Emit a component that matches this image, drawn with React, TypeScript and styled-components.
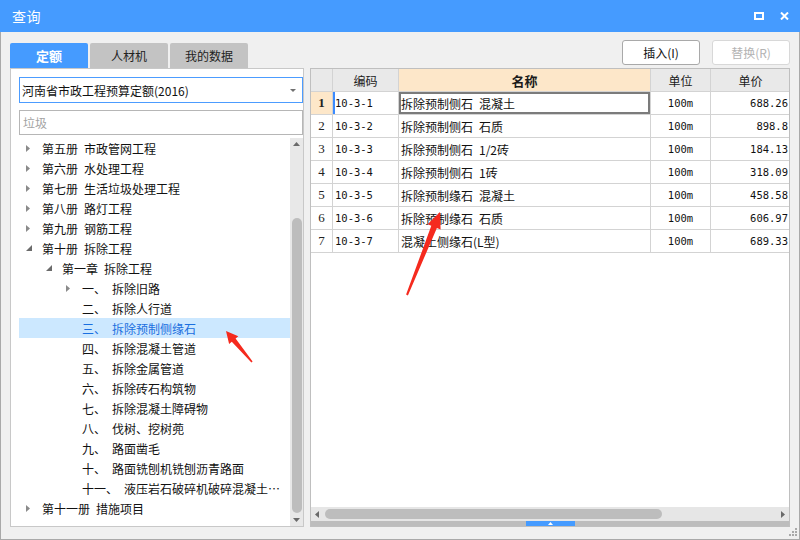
import React from "react";
import styled, { createGlobalStyle } from "styled-components";

const CJK = `"Noto Sans CJK SC", "Noto Sans", sans-serif`;
const MONO = `"DejaVu Sans Mono", "Liberation Mono", "Noto Sans CJK SC", monospace`;

const GlobalStyle = createGlobalStyle`
  *, *::before, *::after { box-sizing: border-box; }
  html, body { margin: 0; padding: 0; background: #ffffff; }
  body { font-family: ${CJK}; }
`;

const Window = styled.div`
  position: relative;
  width: 800px;
  height: 540px;
  display: flex;
  flex-direction: column;
  background: #f0f0f0;
  overflow: hidden;
`;

const TitleBar = styled.div`
  flex: none;
  height: 32px;
  background: #459bff;
  color: #ffffff;
  display: flex;
  align-items: center;
  padding: 0 11px 0 12px;
`;

const Title = styled.div`
  flex: 1;
  font-size: 14px;
  letter-spacing: 0.5px;
`;

const TitleButtons = styled.div`
  display: flex;
  align-items: center;
  gap: 16px;
`;

const Glyph = styled.svg`
  display: block;
  flex: none;
`;

const Body = styled.div`
  flex: 1;
  min-height: 0;
  display: flex;
  flex-direction: column;
  border: 1px solid #a9a9a9;
  border-top: none;
  padding: 0 9px 12px;
`;

const TopRow = styled.div`
  flex: none;
  height: 36px;
  display: flex;
  justify-content: space-between;
`;

const Tabs = styled.div`
  display: flex;
  gap: 2px;
  align-self: flex-end;
`;

const Tab = styled.div<{ $active?: boolean }>`
  width: 78px;
  height: 25px;
  display: flex;
  align-items: center;
  justify-content: center;
  font-size: ${(p) => (p.$active ? 13 : 12)}px;
  font-weight: ${(p) => (p.$active ? 700 : 400)};
  background: ${(p) => (p.$active ? "#459bff" : "#c3c3c3")};
  color: ${(p) => (p.$active ? "#ffffff" : "#222222")};
  border-radius: 2px 2px 0 0;
`;

const Actions = styled.div`
  display: flex;
  gap: 12px;
  padding-top: 8px;
`;

const ActionButton = styled.button<{ $disabled?: boolean }>`
  width: 78px;
  height: 25px;
  padding: 0;
  background: #ffffff;
  border: 1px solid ${(p) => (p.$disabled ? "#d8d8d8" : "#a9a9a9")};
  border-radius: 3px;
  font-family: ${CJK};
  font-size: 12px;
  color: ${(p) => (p.$disabled ? "#b3b3b3" : "#111111")};
`;

const Content = styled.div`
  flex: 1;
  min-height: 0;
  display: flex;
  gap: 6px;
`;

const LeftPanel = styled.div`
  width: 294px;
  flex: none;
  background: #ffffff;
  border: 1px solid #c8c8c8;
  display: flex;
  flex-direction: column;
  padding: 8px 0 0 8px;
`;

const Select = styled.div`
  flex: none;
  height: 26px;
  border: 1px solid #4c9cff;
  display: flex;
  align-items: center;
  padding: 0 6px 0 2px;
  font-size: 12px;
  color: #111111;
`;

const SelectText = styled.span`
  flex: 1;
`;

const Search = styled.div`
  flex: none;
  height: 25px;
  margin-top: 7px;
  border: 1px solid #b6b6b6;
  display: flex;
  align-items: center;
  padding-left: 3px;
  font-size: 12px;
  color: #a3a3a3;
`;

const TreeArea = styled.div`
  flex: 1;
  min-height: 0;
  margin-top: 3px;
  display: flex;
`;

const TreeList = styled.div`
  flex: 1;
  min-width: 0;
  overflow: hidden;
`;

const TreeRow = styled.div<{ $level: number; $selected?: boolean }>`
  height: 20px;
  display: flex;
  align-items: center;
  padding-left: ${(p) => p.$level * 20}px;
  padding-right: 3px;
  background: ${(p) => (p.$selected ? "#cce8ff" : "transparent")};
  color: ${(p) => (p.$selected ? "#1a6fe0" : "#111111")};
  font-size: 12px;
  white-space: nowrap;
`;

const Toggle = styled.span`
  width: 23px;
  flex: none;
  display: flex;
  align-items: center;
  padding-left: 7px;
`;

const Label = styled.span`
  display: flex;
  gap: 6px;
  min-width: 0;
`;

const LabelNum = styled.span`
  flex: none;
`;

const LabelName = styled.span`
  overflow: hidden;
  text-overflow: ellipsis;
  white-space: nowrap;
  min-width: 0;
`;

const VScroll = styled.div`
  width: 13px;
  flex: none;
  background: #e8e8e8;
  display: flex;
  flex-direction: column;
`;

const ArrowBox = styled.div<{ $w?: number }>`
  flex: none;
  height: ${(p) => (p.$w ? "100%" : "12px")};
  width: ${(p) => (p.$w ? `${p.$w}px` : "100%")};
  display: flex;
  align-items: center;
  justify-content: center;
`;

const VTrack = styled.div`
  flex: 1;
  display: flex;
  flex-direction: column;
  align-items: center;
`;

const VThumb = styled.div`
  width: 10px;
  height: 295px;
  margin-top: 68px;
  border-radius: 5px;
  background: #bdbdbd;
`;

const RightPanel = styled.div`
  flex: 1;
  min-width: 0;
  background: #ffffff;
  border: 1px solid #bfbfbf;
  display: flex;
  flex-direction: column;
`;

const Grid = styled.div`
  flex: 1;
  min-height: 0;
  display: grid;
  grid-template-columns: 22px 66px 252px 60px 78px;
  grid-auto-rows: 23px;
  align-content: start;
`;

type Align = "left" | "center" | "right";

const Cell = styled.div<{ $align?: Align; $last?: boolean }>`
  display: flex;
  align-items: center;
  justify-content: ${(p) =>
    p.$align === "center" ? "center" : p.$align === "right" ? "flex-end" : "flex-start"};
  padding: 0 ${(p) => (p.$last ? 1 : 2)}px 0 2px;
  border-right: ${(p) => (p.$last ? "none" : "1px solid #d3d3d3")};
  border-bottom: 1px solid #d3d3d3;
  font-size: 12px;
  color: #111111;
  white-space: nowrap;
  overflow: hidden;
`;

const HeadCell = styled(Cell)<{ $accent?: boolean }>`
  justify-content: center;
  background: ${(p) => (p.$accent ? "#fde7c9" : "#e9e9e9")};
  font-weight: ${(p) => (p.$accent ? 700 : 400)};
  font-size: ${(p) => (p.$accent ? 13 : 12)}px;
  color: #1a1a1a;
`;

const NumCell = styled(Cell)<{ $active?: boolean }>`
  justify-content: center;
  font-family: "Liberation Serif", serif;
  font-size: 13px;
  background: ${(p) => (p.$active ? "#fde7c9" : "#ffffff")};
  font-weight: ${(p) => (p.$active ? 700 : 400)};
  color: #222222;
`;

const MonoCell = styled(Cell)<{ $marked?: boolean }>`
  font-family: ${MONO};
  font-size: 10.5px;
  box-shadow: ${(p) => (p.$marked ? "inset 2px 0 0 #3b8bff" : "none")};
`;

const NameCell = styled(Cell)<{ $focused?: boolean }>`
  box-shadow: ${(p) => (p.$focused ? "inset 0 0 0 2px #7b7b7b" : "none")};
`;

const HScroll = styled.div`
  flex: none;
  height: 14px;
  background: #e6e6e6;
  display: flex;
  align-items: center;
`;

const HTrack = styled.div`
  flex: 1;
  display: flex;
  align-items: center;
`;

const HThumb = styled.div`
  width: 337px;
  height: 10px;
  margin-left: 2px;
  border-radius: 5px;
  background: #bdbdbd;
`;

const Strip = styled.div`
  flex: none;
  height: 5px;
  background: #bdbdbd;
  display: flex;
  justify-content: center;
`;

const StripHandle = styled.div`
  width: 49px;
  height: 5px;
  background: #459bff;
  display: flex;
  align-items: center;
  justify-content: center;
`;

const Grip = styled.svg`
  position: absolute;
  right: 2px;
  bottom: 3px;
  display: block;
`;

const Overlay = styled.svg`
  position: absolute;
  left: 0;
  top: 0;
  pointer-events: none;
`;

type Dir = "up" | "down" | "left" | "right";

const Triangle: React.FC<{ dir: Dir; size?: number; depth?: number; color?: string }> = ({
  dir,
  size = 7,
  depth = 4,
  color = "#6a6a6a",
}) => {
  const horiz = dir === "left" || dir === "right";
  const w = horiz ? depth : size;
  const h = horiz ? size : depth;
  let pts = "";
  if (dir === "up") pts = `0,${h} ${w},${h} ${w / 2},0`;
  if (dir === "down") pts = `0,0 ${w},0 ${w / 2},${h}`;
  if (dir === "left") pts = `${w},0 ${w},${h} 0,${h / 2}`;
  if (dir === "right") pts = `0,0 0,${h} ${w},${h / 2}`;
  return (
    <Glyph width={w} height={h} viewBox={`0 0 ${w} ${h}`}>
      <polygon points={pts} fill={color} />
    </Glyph>
  );
};

const Expanded = () => (
  <Glyph width={6} height={6} viewBox="0 0 6 6">
    <polygon points="6,0 6,6 0,6" fill="#6b6b6b" />
  </Glyph>
);

type TreeItem = {
  level: number;
  toggle?: "open" | "closed";
  num: string;
  name: string;
  selected?: boolean;
};

const tree: TreeItem[] = [
  { level: 0, toggle: "closed", num: "第五册", name: "市政管网工程" },
  { level: 0, toggle: "closed", num: "第六册", name: "水处理工程" },
  { level: 0, toggle: "closed", num: "第七册", name: "生活垃圾处理工程" },
  { level: 0, toggle: "closed", num: "第八册", name: "路灯工程" },
  { level: 0, toggle: "closed", num: "第九册", name: "钢筋工程" },
  { level: 0, toggle: "open", num: "第十册", name: "拆除工程" },
  { level: 1, toggle: "open", num: "第一章", name: "拆除工程" },
  { level: 2, toggle: "closed", num: "一、", name: "拆除旧路" },
  { level: 2, num: "二、", name: "拆除人行道" },
  { level: 2, num: "三、", name: "拆除预制侧缘石", selected: true },
  { level: 2, num: "四、", name: "拆除混凝土管道" },
  { level: 2, num: "五、", name: "拆除金属管道" },
  { level: 2, num: "六、", name: "拆除砖石构筑物" },
  { level: 2, num: "七、", name: "拆除混凝土障碍物" },
  { level: 2, num: "八、", name: "伐树、挖树蔸" },
  { level: 2, num: "九、", name: "路面凿毛" },
  { level: 2, num: "十、", name: "路面铣刨机铣刨沥青路面" },
  { level: 2, num: "十一、", name: "液压岩石破碎机破碎混凝土路面" },
  { level: 0, toggle: "closed", num: "第十一册", name: "措施项目" },
];

const rows = [
  { code: "10-3-1", name: "拆除预制侧石\u2002混凝土", unit: "100m", price: "688.26" },
  { code: "10-3-2", name: "拆除预制侧石\u2002石质", unit: "100m", price: "898.8" },
  { code: "10-3-3", name: "拆除预制侧石\u20021/2砖", unit: "100m", price: "184.13" },
  { code: "10-3-4", name: "拆除预制侧石\u20021砖", unit: "100m", price: "318.09" },
  { code: "10-3-5", name: "拆除预制缘石\u2002混凝土", unit: "100m", price: "458.58" },
  { code: "10-3-6", name: "拆除预制缘石\u2002石质", unit: "100m", price: "606.97" },
  { code: "10-3-7", name: "混凝土侧缘石(L型)", unit: "100m", price: "689.33" },
];

export default function App() {
  return (
    <>
      <GlobalStyle />
      <Window>
        <TitleBar>
          <Title>查询</Title>
          <TitleButtons>
            <Glyph width={10} height={8} viewBox="0 0 10 8">
              <rect x="1" y="1" width="8" height="6" fill="none" stroke="#fff" strokeWidth="2" />
            </Glyph>
            <Glyph width={9} height={8} viewBox="0 0 9 8">
              <path d="M1 0.5 L8 7.5 M8 0.5 L1 7.5" stroke="#fff" strokeWidth="2" />
            </Glyph>
          </TitleButtons>
        </TitleBar>
        <Body>
          <TopRow>
            <Tabs>
              <Tab $active>定额</Tab>
              <Tab>人材机</Tab>
              <Tab>我的数据</Tab>
            </Tabs>
            <Actions>
              <ActionButton>插入(I)</ActionButton>
              <ActionButton $disabled>替换(R)</ActionButton>
            </Actions>
          </TopRow>
          <Content>
            <LeftPanel>
              <Select>
                <SelectText>河南省市政工程预算定额(2016)</SelectText>
                <Triangle dir="down" size={6} depth={3} color="#707070" />
              </Select>
              <Search>垃圾</Search>
              <TreeArea>
                <TreeList>
                  {tree.map((t, i) => (
                    <TreeRow key={i} $level={t.level} $selected={t.selected}>
                      <Toggle>
                        {t.toggle === "closed" && (
                          <Triangle dir="right" size={7} depth={4} color="#8a8a8a" />
                        )}
                        {t.toggle === "open" && <Expanded />}
                      </Toggle>
                      <Label>
                        <LabelNum>{t.num}</LabelNum>
                        <LabelName>{t.name}</LabelName>
                      </Label>
                    </TreeRow>
                  ))}
                </TreeList>
                <VScroll>
                  <ArrowBox>
                    <Triangle dir="up" size={7} depth={4} color="#6a6a6a" />
                  </ArrowBox>
                  <VTrack>
                    <VThumb />
                  </VTrack>
                  <ArrowBox>
                    <Triangle dir="down" size={7} depth={4} color="#6a6a6a" />
                  </ArrowBox>
                </VScroll>
              </TreeArea>
            </LeftPanel>
            <RightPanel>
              <Grid>
                <HeadCell />
                <HeadCell>编码</HeadCell>
                <HeadCell $accent>名称</HeadCell>
                <HeadCell>单位</HeadCell>
                <HeadCell $last>单价</HeadCell>
                {rows.map((r, i) => (
                  <React.Fragment key={r.code}>
                    <NumCell $active={i === 0}>{i + 1}</NumCell>
                    <MonoCell $marked={i === 0}>{r.code}</MonoCell>
                    <NameCell $focused={i === 0}>{r.name}</NameCell>
                    <MonoCell $align="center">{r.unit}</MonoCell>
                    <MonoCell $align="right" $last>
                      {r.price}
                    </MonoCell>
                  </React.Fragment>
                ))}
              </Grid>
              <HScroll>
                <ArrowBox $w={12}>
                  <Triangle dir="left" size={7} depth={4} color="#6a6a6a" />
                </ArrowBox>
                <HTrack>
                  <HThumb />
                </HTrack>
                <ArrowBox $w={12}>
                  <Triangle dir="right" size={7} depth={4} color="#6a6a6a" />
                </ArrowBox>
              </HScroll>
              <Strip>
                <StripHandle>
                  <Triangle dir="up" size={5} depth={3} color="#ffffff" />
                </StripHandle>
              </Strip>
            </RightPanel>
          </Content>
        </Body>
        <Grip width={9} height={9} viewBox="0 0 9 9">
          <rect x="6" y="0" width="2" height="2" fill="#a9a9a9" />
          <rect x="3" y="3" width="2" height="2" fill="#a9a9a9" />
          <rect x="6" y="3" width="2" height="2" fill="#a9a9a9" />
          <rect x="0" y="6" width="2" height="2" fill="#a9a9a9" />
          <rect x="3" y="6" width="2" height="2" fill="#a9a9a9" />
          <rect x="6" y="6" width="2" height="2" fill="#a9a9a9" />
        </Grip>
        <Overlay width={800} height={540} viewBox="0 0 800 540">
          <polygon
            points="226,331 238.3,336.3 235.6,338.6 252.6,361.5 251.4,362.5 231.8,341.8 229.1,344.1"
            fill="#f52a1e"
          />
          <polygon
            points="440,212 440.6,229.5 436.9,228 407.9,295.4 406.1,294.6 431.3,225.8 427.6,224.3"
            fill="#f52a1e"
          />
        </Overlay>
      </Window>
    </>
  );
}
